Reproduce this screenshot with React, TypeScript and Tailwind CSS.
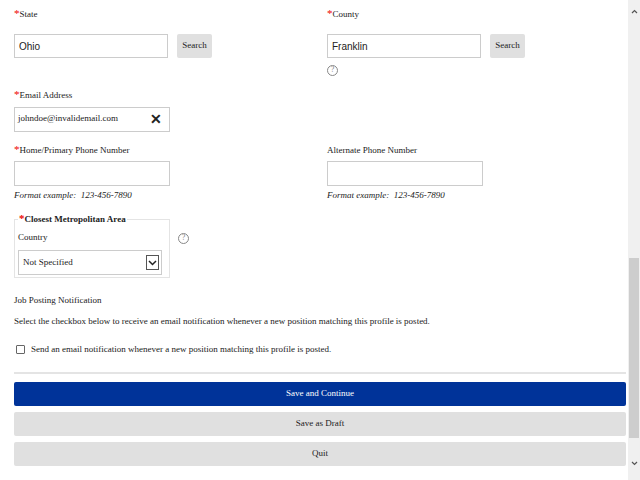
import React from "react";

const Req = () => <span className="text-[#e00] text-[11px] align-top leading-none">*</span>;
const Help = () => (
  <span className="inline-flex w-[11px] h-[11px] rounded-full border border-[#888] text-[#888] text-[8px] items-center justify-center leading-none">?</span>
);

export default function App() {
  return (
    <div className="flex w-[640px] h-[480px] overflow-hidden bg-white text-[#222]" style={{ fontFamily: '"Liberation Serif", serif' }}>
      <div className="flex-1 pl-[14px] pr-[2px] text-[9px]">
        <div className="grid grid-cols-[313px_1fr] pt-[8px]">
          <div>
            <div className="h-[14px]"><Req />State</div>
            <div className="flex items-center gap-[9px] mt-[12px]">
              <div className="w-[154px] h-[24px] border border-[#ccc] flex items-center px-[4px] text-[10px]" style={{ fontFamily: '"Liberation Sans", sans-serif' }}>Ohio</div>
              <div className="w-[35px] h-[24px] bg-[#e0e0e0] rounded-[2px] flex items-center justify-center">Search</div>
            </div>
          </div>
          <div>
            <div className="h-[14px]"><Req />County</div>
            <div className="flex items-center gap-[9px] mt-[12px]">
              <div className="w-[154px] h-[24px] border border-[#ccc] flex items-center px-[4px] text-[10px]" style={{ fontFamily: '"Liberation Sans", sans-serif' }}>Franklin</div>
              <div className="w-[35px] h-[24px] bg-[#e0e0e0] rounded-[2px] flex items-center justify-center">Search</div>
            </div>
            <div className="mt-[5px]"><Help /></div>
          </div>
        </div>
        <div className="mt-[12px] h-[14px]"><Req />Email Address</div>
        <div className="mt-[4px] w-[156px] h-[25px] border border-[#ccc] flex items-center justify-between px-[3px]">
          <span>johndoe@invalidemail.com</span>
          <span className="text-[14px] font-bold pr-[4px]" style={{ fontFamily: '"Liberation Sans", sans-serif' }}>✕</span>
        </div>
        <div className="grid grid-cols-[313px_1fr] mt-[12px]">
          {["Home/Primary Phone Number", "Alternate Phone Number"].map((l, i) => (
            <div key={l}>
              <div className="h-[14px]">{i === 0 && <Req />}{l}</div>
              <div className="mt-[3px] w-[156px] h-[25px] border border-[#ccc]" />
              <div className="mt-[3px] italic">Format example:&nbsp; 123-456-7890</div>
            </div>
          ))}
        </div>
        <div className="flex items-start mt-[11px]">
          <fieldset className="w-[156px] h-[65px] border border-[#e4e4e4] px-[3px]">
            <legend className="font-bold px-[1px]"><Req />Closest Metropolitan Area</legend>
            <div className="mt-[4px]">Country</div>
            <div className="mt-[6px] w-[144px] h-[25px] border border-[#ccc] flex items-center justify-between pl-[4px] pr-[2px]">
              <span>Not Specified</span>
              <span className="w-[13px] h-[15px] border border-[#555] flex items-center justify-center">
                <svg width="9" height="6" viewBox="0 0 9 6"><path d="M1 1l3.5 3.5L8 1" stroke="#222" strokeWidth="1.5" fill="none" /></svg>
              </span>
            </div>
          </fieldset>
          <div className="ml-[8px] mt-[18px]"><Help /></div>
        </div>
        <div className="mt-[16px]">Job Posting Notification</div>
        <div className="mt-[7px]">Select the checkbox below to receive an email notification whenever a new position matching this profile is posted.</div>
        <div className="mt-[15px] flex items-center gap-[6px] pl-[2px]">
          <span className="w-[9px] h-[9px] border border-[#666] rounded-[1px]" />
          <span>Send an email notification whenever a new position matching this profile is posted.</span>
        </div>
        <div className="mt-[15px] h-[2px] bg-[#e4e4e4]" />
        <div className="mt-[8px] flex flex-col gap-[6px]">
          <div className="h-[24px] bg-[#003399] text-white rounded-[2px] flex items-center justify-center">Save and Continue</div>
          <div className="h-[24px] bg-[#e0e0e0] rounded-[2px] flex items-center justify-center">Save as Draft</div>
          <div className="h-[24px] bg-[#e0e0e0] rounded-[2px] flex items-center justify-center">Quit</div>
        </div>
      </div>
      <div className="w-[12px] bg-[#f0f0f0] flex flex-col items-center">
        <svg className="mt-[9px]" width="7" height="5" viewBox="0 0 7 5"><path d="M1 4l2.5-2.5L6 4" stroke="#555" strokeWidth="1.2" fill="none" /></svg>
        <div className="mt-[244px] w-[10px] h-[180px] bg-[#cdcdcd]" />
        <svg className="mt-[23px]" width="7" height="5" viewBox="0 0 7 5"><path d="M1 1l2.5 2.5L6 1" stroke="#555" strokeWidth="1.2" fill="none" /></svg>
      </div>
    </div>
  );
}
